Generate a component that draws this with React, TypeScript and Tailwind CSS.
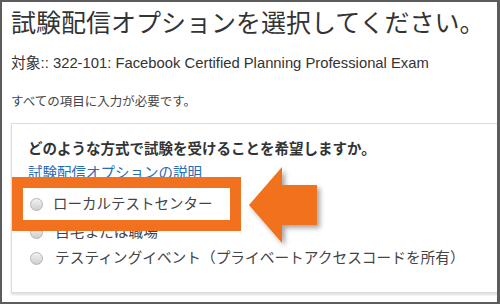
import React from "react";

const jp = { fontFamily: '"Liberation Sans", "Noto Sans CJK JP", sans-serif' };

function Radio() {
  return (
    <span className="inline-block w-[13px] h-[13px] shrink-0 rounded-full border border-[#b4b4b4] bg-linear-to-b from-[#f2f2f2] to-[#cfcfcf]" />
  );
}

function Option({ label, hidden }: { label: string; hidden?: boolean }) {
  return (
    <div className={hidden ? "invisible flex items-center h-[26px] pl-[2px]" : "flex items-center h-[26px] pl-[2px]"}>
      <Radio />
      <span className="ml-[12px] text-[14.7px] text-[#444] leading-none">{label}</span>
    </div>
  );
}

export default function App() {
  return (
    <div
      style={jp}
      className="relative w-[500px] h-[304px] overflow-hidden bg-white border-l-2 border-t-2 border-r-[3px] border-b-2 border-[#5c5c5c] pl-[9px]"
    >
      {/* Heading */}
      <h1 className="mt-[8px] text-[25px] leading-[27px] text-[#333] font-normal whitespace-nowrap">
        試験配信オプションを選択してください。
      </h1>
      <p className="mt-[18px] text-[14.8px] leading-[16px] text-[#333] whitespace-nowrap">
        対象:: 322-101: Facebook Certified Planning Professional Exam
      </p>
      <p className="mt-[23px] text-[12.5px] leading-[16px] text-[#444]">すべての項目に入力が必要です。</p>

      {/* Panel */}
      <div className="mt-[13px] w-[500px] border border-[#dcdcdc] bg-white shadow-[0_2px_2px_rgba(0,0,0,0.12)] pl-[16px] pt-[15px] pb-[21px]">
        <p className="text-[14.5px] leading-[20px] font-bold text-[#333]">
          どのような方式で試験を受けることを希望しますか。
        </p>
        <p className="mt-[4px] text-[14.5px] leading-[20px] text-[#2a6bb5]">試験配信オプションの説明</p>
        <div className="mt-[10px]">
          {/* first option sits under the highlight box */}
          <Option label="ローカルテストセンター" hidden />
          <Option label="自宅または職場" />
          <Option label="テスティングイベント（プライベートアクセスコードを所有）" />
        </div>
      </div>

      {/* Highlight box */}
      <div className="absolute left-[10px] top-[175px] w-[229px] h-[54px] border-[11px] border-[#f1711f] bg-white flex items-center pl-[7px]">
        <Radio />
        <span className="ml-[10px] text-[14.5px] text-[#444] leading-none">ローカルテストセンター</span>
      </div>

      {/* Arrow */}
      <svg className="absolute left-[240px] top-[158px]" width="90" height="95" viewBox="0 0 90 95">
        <defs>
          <filter id="sh" x="-20%" y="-20%" width="150%" height="150%">
            <feDropShadow dx="3" dy="3" stdDeviation="2.5" floodColor="#000" floodOpacity="0.35" />
          </filter>
        </defs>
        <polygon
          points="7,45 40,7 40,25 75,25 75,65 40,65 40,83"
          fill="#f1711f"
          filter="url(#sh)"
        />
      </svg>
    </div>
  );
}
